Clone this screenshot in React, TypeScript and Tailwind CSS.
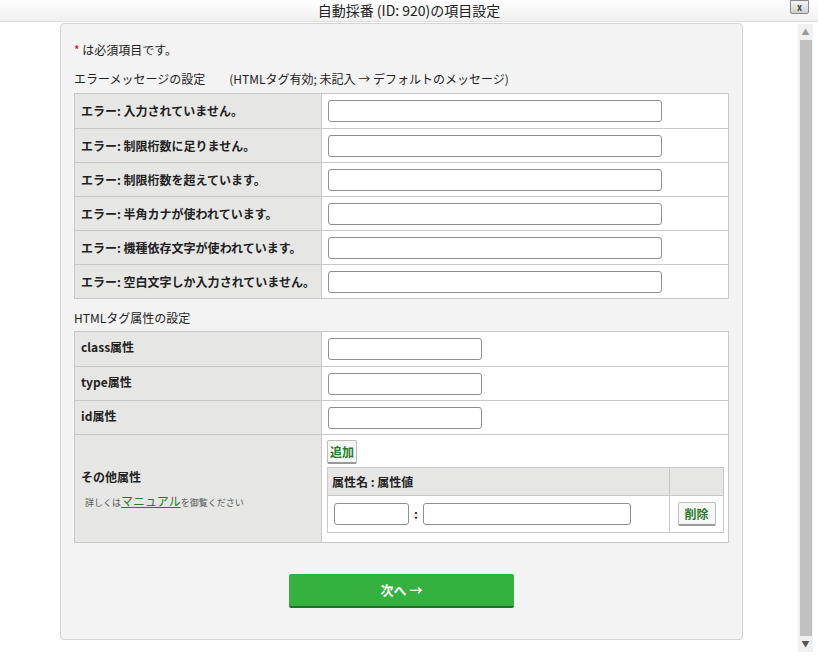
export default function App() {
  const errs = ["エラー: 入力されていません。","エラー: 制限桁数に足りません。","エラー: 制限桁数を超えています。","エラー: 半角カナが使われています。","エラー: 機種依存文字が使われています。","エラー: 空白文字しか入力されていません。"];
  const attrs = ["class属性","type属性","id属性"];
  const inp = "h-[22px] border border-[#8f8f8f] rounded-[3px] bg-white";
  return (
    <div className="w-[818px] h-[658px] bg-white relative overflow-hidden text-[12px] text-[#222]" style={{fontFamily:'"Noto Sans CJK JP","Noto Sans",sans-serif'}}>
      <div className="h-[22px] bg-gradient-to-b from-white to-[#f0f0f0] border-b border-[#ddd] flex items-center justify-center text-[14px] text-[#222]">自動採番 (ID: 920)の項目設定</div>
      <div className="absolute left-[790px] top-0 w-[19px] h-[14px] bg-gradient-to-b from-[#f5f5f5] to-[#cfcfcf] border border-[#888] rounded-b-[2px] text-[9px] font-bold text-[#444] flex items-center justify-center leading-none">x</div>
      <div className="absolute left-[798px] top-[24px] w-[15px] h-[628px] bg-[#f0f0f0] flex flex-col items-center">
        <div className="text-[8px] text-[#999] h-[16px] leading-[16px]">▲</div>
        <div className="w-[12px] flex-1 bg-[#c1c1c1]"></div>
        <div className="text-[8px] text-[#555] h-[16px] leading-[16px]">▼</div>
      </div>
      <div className="flex">
        <div className="ml-[60px] mt-[1px] w-[683px] h-[617px] bg-[#f3f3f3] border border-[#d4d4d4] rounded-[4px] px-[13px] pt-[18px]">
          <div className="h-[16px] leading-[16px]"><span className="text-[#e00]">*</span> は必須項目です。</div>
          <div className="mt-[13px] h-[16px] leading-[16px] flex"><span>エラーメッセージの設定</span><span className="ml-[24px]">(HTMLタグ有効; 未記入 → デフォルトのメッセージ)</span></div>
          <div className="mt-[6px] border border-[#c8c8c8] bg-white">
            {errs.map((e, i) => (
              <div key={i} className={`flex h-[34px] ${i ? "border-t border-[#c8c8c8]" : ""}`}>
                <div className="w-[247px] bg-[#e6e7e5] border-r border-[#c8c8c8] flex items-center pl-[6px] font-bold">{e}</div>
                <div className="flex items-center pl-[6px]"><div className={`${inp} w-[334px]`}></div></div>
              </div>
            ))}
          </div>
          <div className="mt-[11px] h-[16px] leading-[16px]">HTMLタグ属性の設定</div>
          <div className="mt-[5px] border border-[#c8c8c8] bg-white">
            {attrs.map((a, i) => (
              <div key={i} className={`flex h-[34px] ${i ? "border-t border-[#c8c8c8]" : ""}`}>
                <div className="w-[247px] bg-[#e6e7e5] border-r border-[#c8c8c8] flex pt-[6px] pl-[6px] font-bold">{a}</div>
                <div className="flex items-center pl-[6px]"><div className={`${inp} w-[154px]`}></div></div>
              </div>
            ))}
            <div className="flex h-[108px] border-t border-[#c8c8c8]">
              <div className="w-[247px] bg-[#e6e7e5] border-r border-[#c8c8c8] flex flex-col justify-center pl-[6px]">
                <div className="font-bold">その他属性</div>
                <div className="text-[9px] text-[#555] pl-[4px] mt-[6px]">詳しくは<span className="text-[12px] text-[#2a7a2a] underline">マニュアル</span>を御覧ください</div>
              </div>
              <div className="pl-[5px] pt-[5px] flex-1">
                <div className="w-[30px] h-[24px] bg-[#f7f7f7] border border-[#bbb] border-b-[2px] border-b-[#999] rounded-[2px] text-[#2a7a2a] font-bold flex items-center justify-center">追加</div>
                <div className="mt-[3px] mr-[4px] border border-[#c8c8c8]">
                  <div className="flex h-[27px] bg-[#e6e7e5] font-bold">
                    <div className="flex-1 flex items-center pl-[4px] border-r border-[#c8c8c8]">属性名 : 属性値</div>
                    <div className="w-[53px]"></div>
                  </div>
                  <div className="flex h-[37px] border-t border-[#c8c8c8]">
                    <div className="flex-1 flex items-center pl-[6px] border-r border-[#c8c8c8]">
                      <div className={`${inp} w-[75px]`}></div>
                      <span className="mx-[5px] font-bold">:</span>
                      <div className={`${inp} w-[208px]`}></div>
                    </div>
                    <div className="w-[53px] flex items-center justify-center">
                      <div className="w-[38px] h-[24px] bg-[#f7f7f7] border border-[#bbb] border-b-[2px] border-b-[#999] rounded-[2px] text-[#2a7a2a] font-bold flex items-center justify-center">削除</div>
                    </div>
                  </div>
                </div>
              </div>
            </div>
          </div>
          <div className="flex justify-center mt-[31px]">
            <div className="w-[225px] h-[34px] bg-[#35b13f] border-b-[2px] border-[#2a6b30] rounded-[2px] text-white font-bold text-[13px] flex items-center justify-center">次へ →</div>
          </div>
        </div>
      </div>
    </div>
  );
}
